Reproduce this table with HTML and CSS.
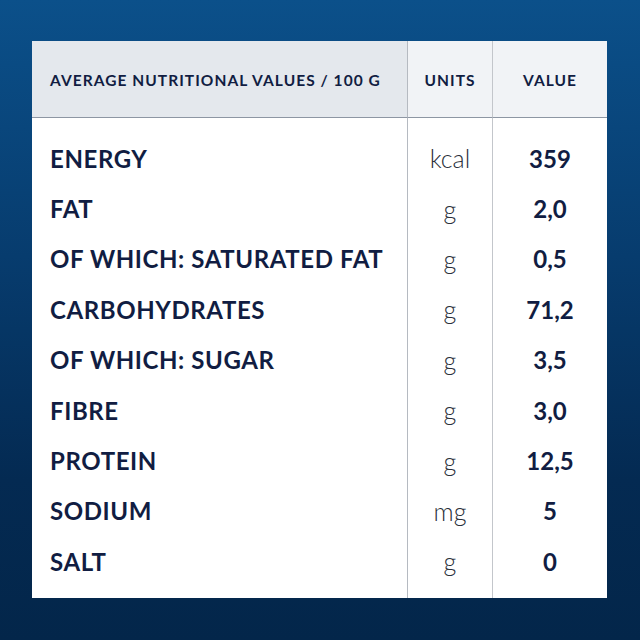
FILE: index.html
```html
<!DOCTYPE html>
<html>
<head>
<meta charset="utf-8">
<link rel="stylesheet" href="styles.css">
</head>
<body>
<div class="page">
  <div class="table">
    <div class="head name">AVERAGE NUTRITIONAL VALUES / 100 G</div>
    <div class="head unit">UNITS</div>
    <div class="head val">VALUE</div>
    <div class="col names">
      <div class="cell">ENERGY</div>
      <div class="cell">FAT</div>
      <div class="cell">OF WHICH: SATURATED FAT</div>
      <div class="cell">CARBOHYDRATES</div>
      <div class="cell">OF WHICH: SUGAR</div>
      <div class="cell">FIBRE</div>
      <div class="cell">PROTEIN</div>
      <div class="cell">SODIUM</div>
      <div class="cell">SALT</div>
    </div>
    <div class="col units">
      <div class="cell">kcal</div>
      <div class="cell">g</div>
      <div class="cell">g</div>
      <div class="cell">g</div>
      <div class="cell">g</div>
      <div class="cell">g</div>
      <div class="cell">g</div>
      <div class="cell">mg</div>
      <div class="cell">g</div>
    </div>
    <div class="col vals">
      <div class="cell">359</div>
      <div class="cell">2,0</div>
      <div class="cell">0,5</div>
      <div class="cell">71,2</div>
      <div class="cell">3,5</div>
      <div class="cell">3,0</div>
      <div class="cell">12,5</div>
      <div class="cell">5</div>
      <div class="cell">0</div>
    </div>
  </div>
</div>
</body>
</html>
```

FILE: styles.css
```css
html, body {
  margin: 0;
  padding: 0;
}
.page {
  width: 640px;
  height: 640px;
  box-sizing: border-box;
  padding: 41px 33px 42px 32px;
  background: linear-gradient(180deg, #0b508a 0%, #073c6e 40%, #042a52 75%, #03264a 100%);
  font-family: "Lato", "Liberation Sans", sans-serif;
  color: #111d42;
}
.table {
  display: grid;
  grid-template-columns: 375px 85px 115px;
  grid-template-rows: 77px 480px;
  background: #ffffff;
}
.head {
  display: flex;
  align-items: center;
  font-size: 15.5px;
  font-weight: 700;
  letter-spacing: 1.05px;
  border-bottom: 1px solid #8d96a3;
  box-sizing: border-box;
  padding-top: 2px;
  white-space: nowrap;
}
.head.name {
  background: #e4e8ed;
  padding-left: 18px;
}
.head.unit, .head.val {
  background: #f1f3f6;
  justify-content: center;
}
.head.unit, .col.units {
  border-left: 1px solid #b5bac1;
}
.head.val, .col.vals {
  border-left: 1px solid #c3c6cb;
}
.col {
  display: flex;
  flex-direction: column;
  padding-top: 15px;
}
.cell {
  height: 50.4px;
  display: flex;
  align-items: center;
  font-size: 24px;
  white-space: nowrap;
}
.names .cell {
  font-weight: 700;
  letter-spacing: 0.6px;
  padding-left: 18px;
}
.units .cell {
  justify-content: center;
  font-weight: 300;
  font-size: 25px;
  color: #2a2f3a;
}
.vals .cell {
  justify-content: center;
  font-weight: 700;
}
```
